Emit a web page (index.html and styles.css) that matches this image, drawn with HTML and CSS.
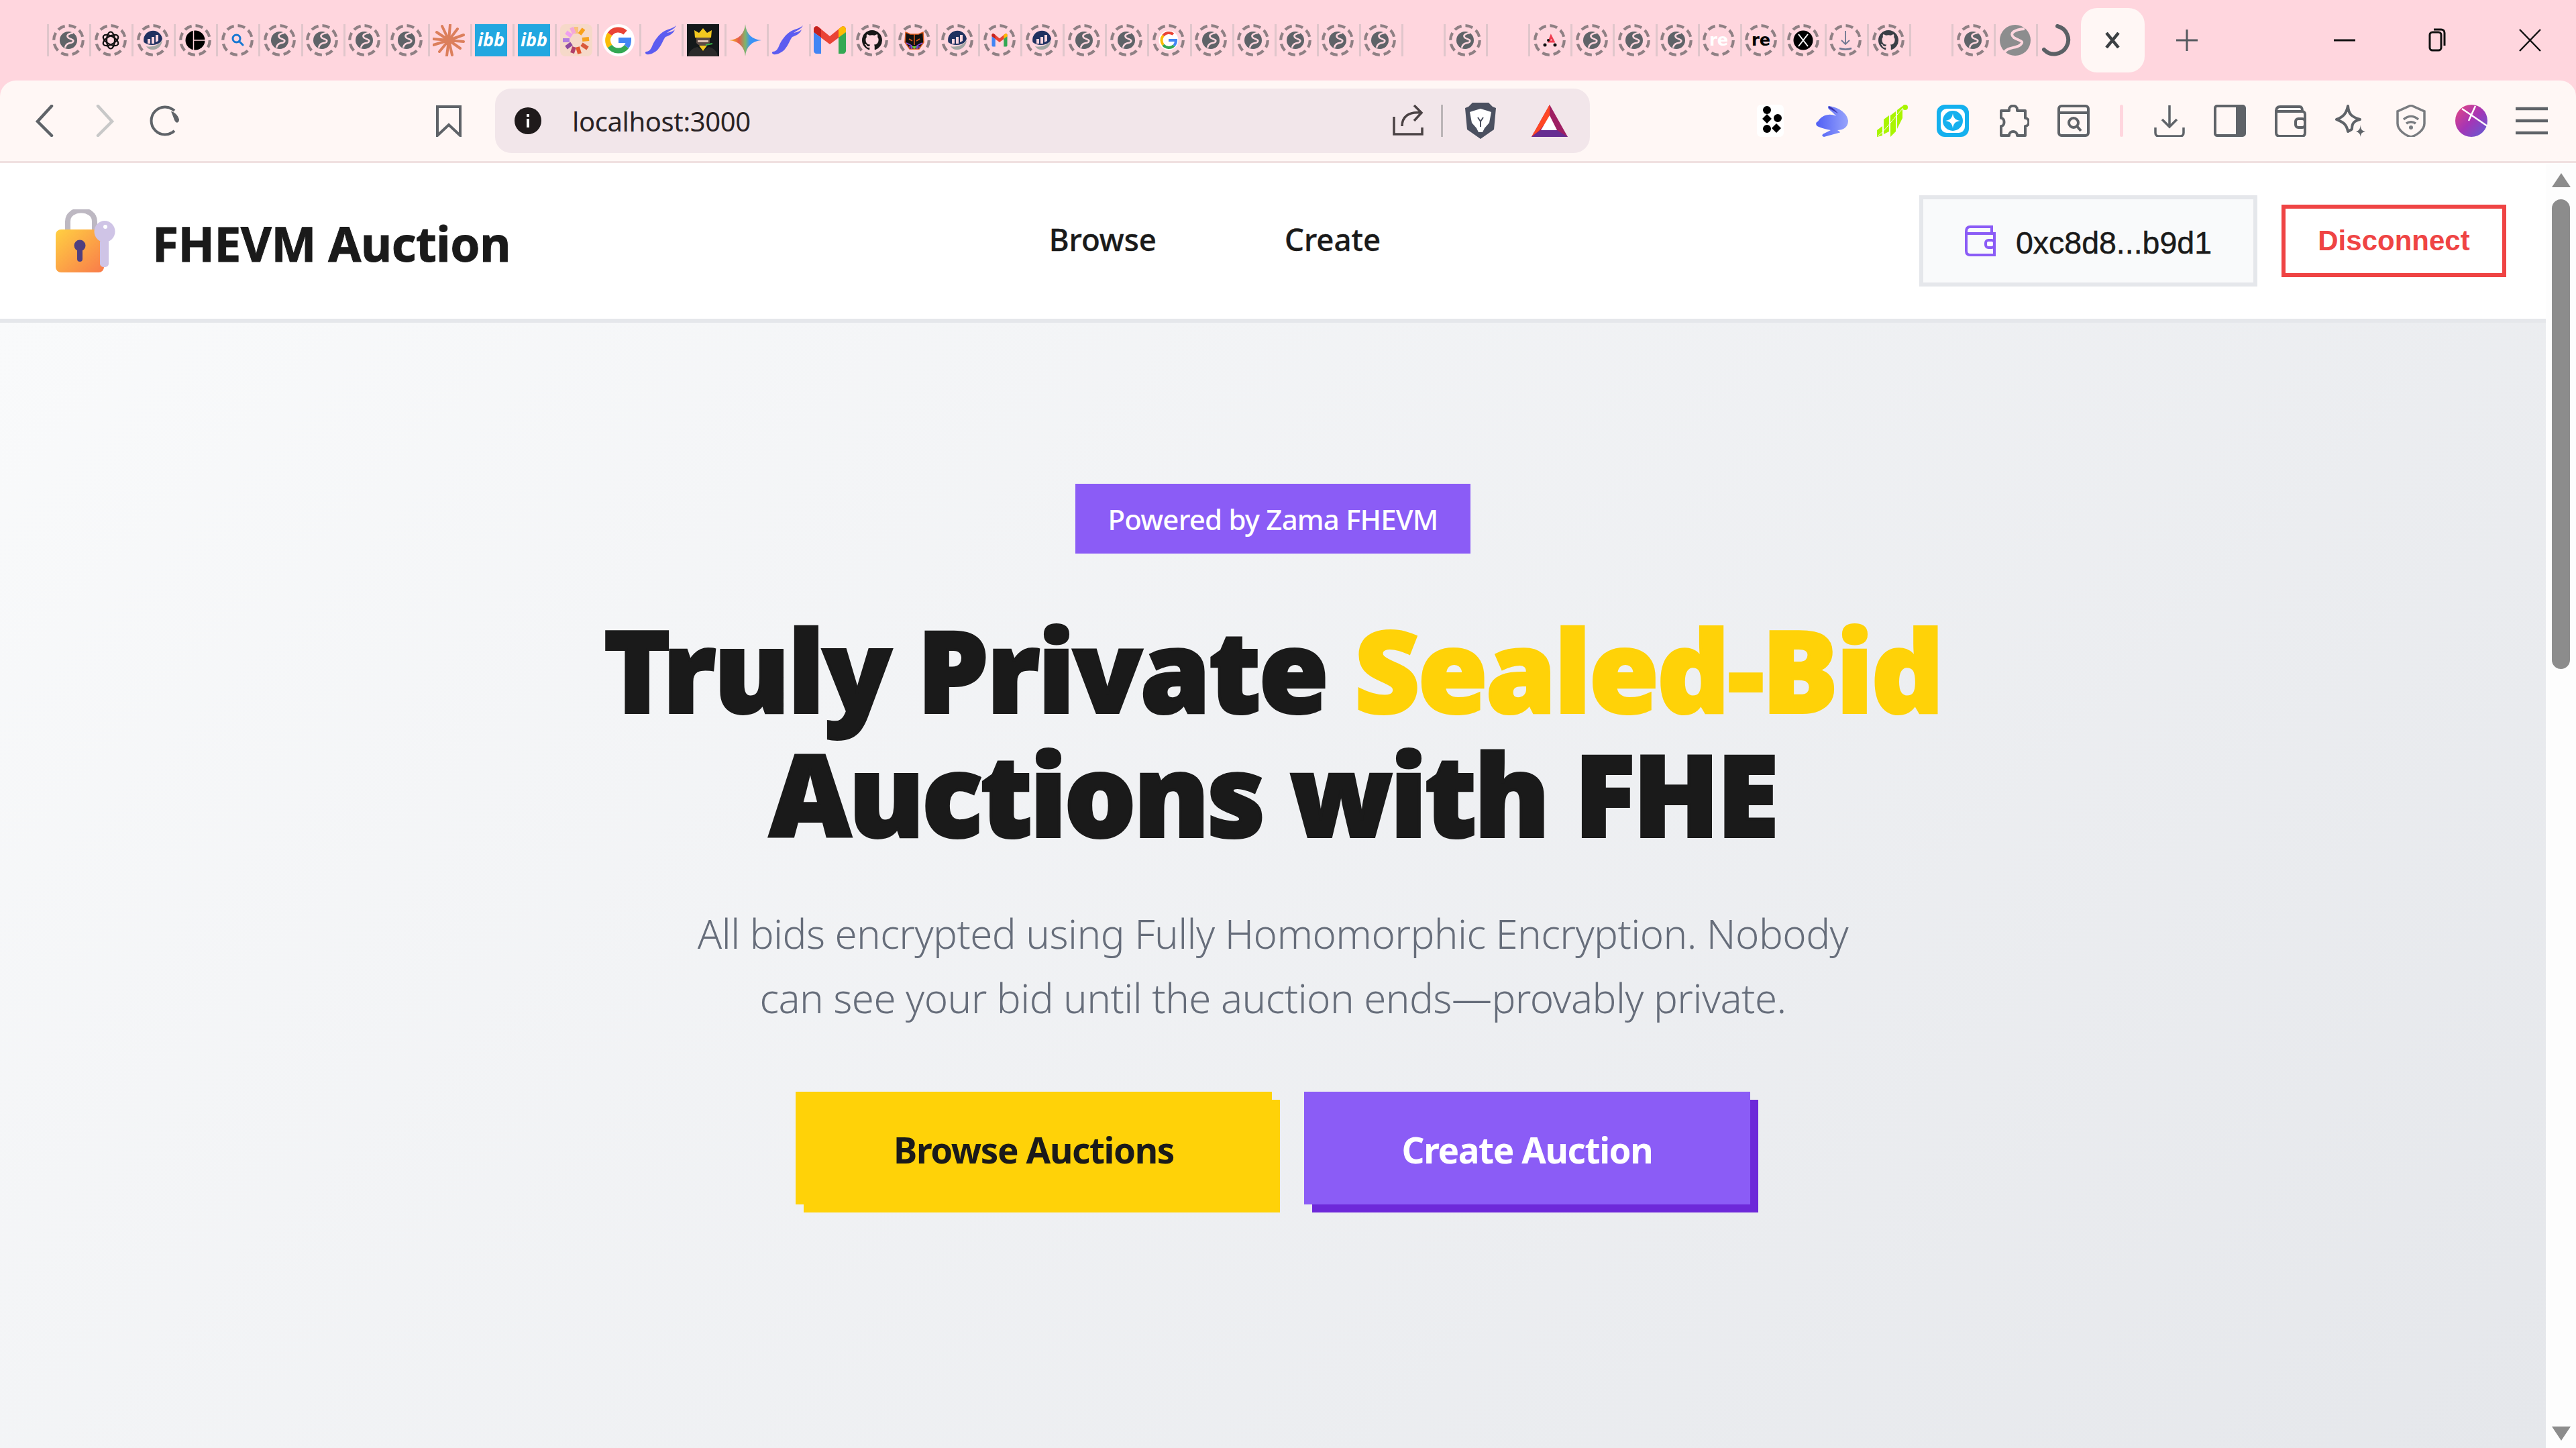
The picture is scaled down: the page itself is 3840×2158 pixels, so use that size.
FILE: index.html
```html
<!DOCTYPE html>
<html lang="en">
<head>
    <meta charset="UTF-8">
    <meta name="viewport" content="width=device-width, initial-scale=1.0">
    <title>FHEVM Auction</title>
    <link rel="stylesheet" href="styles.css">
</head>
<body>
    <!-- shared favicon and toolbar drawings -->
    <svg class="sprite" viewBox="0 0 48 48">
        <defs>
            <linearGradient id="lockBody" x1="0" y1="0" x2="1" y2="1">
                <stop offset="0" stop-color="#ffd042"/>
                <stop offset="1" stop-color="#f97a4a"/>
            </linearGradient>
            <linearGradient id="gemFill" x1="0" y1="0" x2="1" y2="0">
                <stop offset="0" stop-color="#f5c518"/>
                <stop offset=".3" stop-color="#e8594a"/>
                <stop offset=".5" stop-color="#7fb56a"/>
                <stop offset=".65" stop-color="#3a94f5"/>
                <stop offset="1" stop-color="#3a8ff5"/>
            </linearGradient>
            <linearGradient id="rabbitFill" x1="0" y1="0" x2="1" y2="0">
                <stop offset="0" stop-color="#4f5ff5"/>
                <stop offset="1" stop-color="#98a4fb"/>
            </linearGradient>
            <linearGradient id="avatarFill" x1="0" y1="0" x2="1" y2="1">
                <stop offset="0" stop-color="#e8487f"/>
                <stop offset=".5" stop-color="#a535b5"/>
                <stop offset="1" stop-color="#5d5fd6"/>
            </linearGradient>

            <g id="ring"><circle cx="24" cy="24" r="21.8" fill="none" stroke="#8f8084" stroke-width="4.2" stroke-dasharray="11.1 6"/></g>
            <g id="globe">
                <circle cx="24" cy="24" r="13" fill="#5f6368"/>
                <path d="M31 13C24 14 20 17 24 20.5C28 23 34 23 30 27C27 29 21 27 19 35" fill="none" stroke="#ffd6de" stroke-width="2.6"/>
            </g>
            <g id="chart">
                <path d="M10.500 27A14 14 0 1 1 38 22L36 26C30 32 18 33 10.500 27Z" fill="#1f3160"/>
                <path d="M16 29V22H20V29ZM22 29V19H26V29ZM28 27V16H32V25Z" fill="#ffd6de"/>
                <path d="M14 33C24 35 33 31 38 24C37 33 30 39 23 38C19 38 16 36 14 33Z" fill="#a3a6a3"/>
            </g>
            <g id="gmailLogo">
                <path d="M0 8C0 3 5 2 8 5L24 18L40 5C43 2 48 3 48 8V12L24 30L0 12Z" fill="#ea4335"/>
                <path d="M0 8C0 3 5 2 8 5L11 7.500V20L0 12Z" fill="#c5221f"/>
                <path d="M37 7.500L40 5C43 2 48 3 48 8V12L37 20Z" fill="#fbbc04"/>
                <path d="M0 12L11 20V44H4C2 44 0 42 0 40Z" fill="#4285f4"/>
                <path d="M37 20L48 12V40C48 42 46 44 44 44H37Z" fill="#34a853"/>
            </g>
            <path id="octo" d="M8 0C3.580 0 0 3.580 0 8c0 3.540 2.290 6.530 5.470 7.590.4.070.55-.17.55-.38 0-.19-.01-.82-.01-1.490-2.010.37-2.530-.49-2.690-.94-.09-.23-.48-.94-.82-1.130-.28-.15-.68-.52-.01-.53.63-.01 1.080.58 1.230.82.72 1.210 1.870.87 2.330.66.07-.52.28-.87.51-1.070-1.780-.2-3.640-.89-3.640-3.950 0-.87.31-1.590.82-2.150-.08-.2-.36-1.020.08-2.120 0 0 .67-.21 2.200.82.64-.18 1.320-.27 2-.27.68 0 1.360.09 2 .27 1.530-1.040 2.200-.82 2.200-.82.44 1.100.16 1.920.08 2.120.51.56.82 1.270.82 2.150 0 3.070-1.870 3.750-3.650 3.950.29.25.54.73.54 1.480 0 1.070-.01 1.930-.01 2.200 0 .21.15.46.55.38A8.013 8.013 0 0016 8c0-4.420-3.580-8-8-8z"/>
            <path id="feather" d="M47 2C44 8 38 9 33 13C37 12 42 11 45 8C43 14 37 17 31 19C27 24 26 30 21 36C17 42 8 46 3 45C1 44 0 42 2 41C6 41 9 38 11 33C14 25 21 15 30 10C36 7 43 6 47 2Z" fill="#5c5cf0"/>
        </defs>
    </svg>

    <div class="tabstrip">
        <div class="tabs">
            <div class="tab"><svg class="fav" viewBox="0 0 48 48"><use href="#ring"/><use href="#globe"/></svg></div>
            <div class="tab"><svg class="fav" viewBox="0 0 48 48"><use href="#ring"/><g fill="none" stroke="#111" stroke-width="2.200"><ellipse cx="24" cy="24" rx="6" ry="12.500"/><ellipse cx="24" cy="24" rx="6" ry="12.500" transform="rotate(60 24 24)"/><ellipse cx="24" cy="24" rx="6" ry="12.500" transform="rotate(120 24 24)"/></g></svg></div>
            <div class="tab"><svg class="fav" viewBox="0 0 48 48"><use href="#ring"/><use href="#chart"/></svg></div>
            <div class="tab"><svg class="fav" viewBox="0 0 48 48"><use href="#ring"/><circle cx="24" cy="24" r="14.500" fill="#000"/><path d="M21.500 9V39M21.500 24H39" stroke="#ffd6de" stroke-width="1.500"/></svg></div>
            <div class="tab"><svg class="fav" viewBox="0 0 48 48"><use href="#ring"/><circle cx="22.500" cy="21.500" r="5.500" fill="none" stroke="#1677d2" stroke-width="3"/><path d="M26.500 25.500L32 31" stroke="#1677d2" stroke-width="3" stroke-linecap="round"/></svg></div>
            <div class="tab"><svg class="fav" viewBox="0 0 48 48"><use href="#ring"/><use href="#globe"/></svg></div>
            <div class="tab"><svg class="fav" viewBox="0 0 48 48"><use href="#ring"/><use href="#globe"/></svg></div>
            <div class="tab"><svg class="fav" viewBox="0 0 48 48"><use href="#ring"/><use href="#globe"/></svg></div>
            <div class="tab"><svg class="fav" viewBox="0 0 48 48"><use href="#ring"/><use href="#globe"/></svg></div>
            <div class="tab"><svg class="fav" viewBox="0 0 48 48"><path d="M24 24L14 3M24 24L26 1M24 24L37 7M24 24L46 16M24 24L46 26M24 24L41 36M24 24L29 46M24 24L21 47M24 24L10 41M24 24L1 31M24 24L0 22M24 24L6 12" stroke="#dc7f5c" stroke-width="4" stroke-linecap="round"/></svg></div>
            <div class="tab"><svg class="fav" viewBox="0 0 48 48"><rect width="48" height="48" fill="#22a7e0"/><text x="24" y="33" class="ibb">ibb</text></svg></div>
            <div class="tab"><svg class="fav" viewBox="0 0 48 48"><rect width="48" height="48" fill="#22a7e0"/><text x="24" y="33" class="ibb">ibb</text></svg></div>
            <div class="tab"><svg class="fav" viewBox="0 0 48 48"><rect width="48" height="48" rx="8" fill="#f6d9c9"/><g stroke-width="6"><path d="M24 4V14" stroke="#f9c27b"/><path d="M35 7L29 15" stroke="#f9a11b"/><path d="M43 22L33 23" stroke="#f6a21e"/><path d="M41 36L32 30" stroke="#d9593c"/><path d="M29 44L26 34" stroke="#e2552d"/><path d="M18 43L21 34" stroke="#b0406a"/><path d="M9 35L17 29" stroke="#8e4a9e"/><path d="M4 24L14 24" stroke="#b37fe0"/><path d="M9 12L17 18" stroke="#efa0ee"/><path d="M17 5L21 14" stroke="#f4a8d8"/></g></svg></div>
            <div class="tab"><svg class="fav" viewBox="0 0 48 48"><circle cx="24" cy="24" r="24" fill="#fff"/><g fill="none" stroke-width="8"><path d="M34 12.500A15.500 15.500 0 0 0 11 15" stroke="#ea4335"/><path d="M11 15A15.500 15.500 0 0 0 11 33" stroke="#fbbc04"/><path d="M11 33A15.500 15.500 0 0 0 36 33.500" stroke="#34a853"/><path d="M24 24H39C39 28 38 31 36 33.500" stroke="#4285f4"/></g></svg></div>
            <div class="tab"><svg class="fav" viewBox="0 0 48 48"><use href="#feather"/></svg></div>
            <div class="tab"><svg class="fav" viewBox="0 0 48 48"><rect width="48" height="48" fill="#14181a"/><path d="M12 20L11 9L18 13L24 6L30 13L37 9L36 20Z" fill="#f3c81f"/><path d="M14 20H34V28C30 34 18 34 14 28Z" fill="#5c4a44"/><path d="M16 24H32V27H16Z" fill="#e0c2b4"/><path d="M28 31L38 29" stroke="#3bb54a" stroke-width="2"/><path d="M2 48C3 39 10 35 16 34L24 40L32 34C38 35 45 39 46 48Z" fill="#2b2a2a"/><path d="M18 32H30L24 40Z" fill="#f3c81f"/></svg></div>
            <div class="tab"><svg class="fav" viewBox="0 0 48 48"><path d="M24 0C25 14 34 23 48 24C34 25 25 34 24 48C23 34 14 25 0 24C14 23 23 14 24 0Z" fill="url(#gemFill)"/></svg></div>
            <div class="tab"><svg class="fav" viewBox="0 0 48 48"><use href="#feather"/></svg></div>
            <div class="tab"><svg class="fav" viewBox="0 0 48 48"><use href="#gmailLogo"/></svg></div>
            <div class="tab"><svg class="fav" viewBox="0 0 48 48"><use href="#ring"/><use href="#octo" transform="translate(9 9) scale(1.875)" fill="#161616"/></svg></div>
            <div class="tab"><svg class="fav" viewBox="0 0 48 48"><use href="#ring"/><path d="M11 12L18 15H30L37 12L38 27L31 37H17L10 27Z" fill="#111" stroke="#d9581d" stroke-width="1.500"/><path d="M12 28L20 32V37M36 28L28 32V37M16 34H32" fill="none" stroke="#8a4ee0" stroke-width="1.500"/><path d="M24 15V31M16 22L21 25M32 22L27 25" stroke="#d9581d" stroke-width="1.500"/><path d="M20 33H28L24 37Z" fill="#6fd13f"/></svg></div>
            <div class="tab"><svg class="fav" viewBox="0 0 48 48"><use href="#ring"/><use href="#chart"/></svg></div>
            <div class="tab"><svg class="fav" viewBox="0 0 48 48"><use href="#ring"/><use href="#gmailLogo" transform="translate(12.500 12.500) scale(.48)"/></svg></div>
            <div class="tab"><svg class="fav" viewBox="0 0 48 48"><use href="#ring"/><use href="#chart"/></svg></div>
            <div class="tab"><svg class="fav" viewBox="0 0 48 48"><use href="#ring"/><use href="#globe"/></svg></div>
            <div class="tab"><svg class="fav" viewBox="0 0 48 48"><use href="#ring"/><use href="#globe"/></svg></div>
            <div class="tab"><svg class="fav" viewBox="0 0 48 48"><use href="#ring"/><circle cx="24" cy="24" r="14.500" fill="#fff"/><g fill="none" stroke-width="4"><path d="M31 15A11 11 0 0 0 16 17" stroke="#ea4335"/><path d="M16 17A11 11 0 0 0 16 31" stroke="#fbbc04"/><path d="M16 31A11 11 0 0 0 32 32" stroke="#34a853"/><path d="M24 24H35C35 27 34 30 32 32" stroke="#4285f4"/></g></svg></div>
            <div class="tab"><svg class="fav" viewBox="0 0 48 48"><use href="#ring"/><use href="#globe"/></svg></div>
            <div class="tab"><svg class="fav" viewBox="0 0 48 48"><use href="#ring"/><use href="#globe"/></svg></div>
            <div class="tab"><svg class="fav" viewBox="0 0 48 48"><use href="#ring"/><use href="#globe"/></svg></div>
            <div class="tab"><svg class="fav" viewBox="0 0 48 48"><use href="#ring"/><use href="#globe"/></svg></div>
            <div class="tab"><svg class="fav" viewBox="0 0 48 48"><use href="#ring"/><use href="#globe"/></svg></div>
            <div class="tab"></div>
            <div class="tab"><svg class="fav" viewBox="0 0 48 48"><use href="#ring"/><use href="#globe"/></svg></div>
            <div class="tab"></div>
            <div class="tab"><svg class="fav" viewBox="0 0 48 48"><use href="#ring"/><path d="M26 18L23 26H30Z" fill="none" stroke="#ee3b4f" stroke-width="3"/><circle cx="17" cy="31" r="2.500" fill="#111"/><circle cx="22" cy="24" r="2" fill="#111"/><circle cx="32" cy="31" r="2.500" fill="#111"/></svg></div>
            <div class="tab"><svg class="fav" viewBox="0 0 48 48"><use href="#ring"/><use href="#globe"/></svg></div>
            <div class="tab"><svg class="fav" viewBox="0 0 48 48"><use href="#ring"/><use href="#globe"/></svg></div>
            <div class="tab"><svg class="fav" viewBox="0 0 48 48"><use href="#ring"/><use href="#globe"/></svg></div>
            <div class="tab"><svg class="fav" viewBox="0 0 48 48"><use href="#ring"/><text x="24" y="32" class="re re-light">re</text></svg></div>
            <div class="tab"><svg class="fav" viewBox="0 0 48 48"><use href="#ring"/><text x="24" y="32" class="re">re</text></svg></div>
            <div class="tab"><svg class="fav" viewBox="0 0 48 48"><use href="#ring"/><circle cx="24" cy="24" r="14.500" fill="#000"/><path d="M17 15L31 33M31 15L17 33" stroke="#fff" stroke-width="2"/></svg></div>
            <div class="tab"><svg class="fav" viewBox="0 0 48 48"><use href="#ring"/><path d="M24 10V30M18 24L24 30L30 24" fill="none" stroke="#6d7690" stroke-width="1.800"/><path d="M15 36C20 38 28 38 33 36" fill="none" stroke="#6d7690" stroke-width="2.500"/></svg></div>
            <div class="tab"><svg class="fav" viewBox="0 0 48 48"><use href="#ring"/><use href="#octo" transform="translate(9 9) scale(1.875)" fill="#3a3f47"/></svg></div>
            <div class="tab"></div>
            <div class="tab"><svg class="fav" viewBox="0 0 48 48"><use href="#ring"/><use href="#globe"/></svg></div>
            <div class="tab"><svg class="fav" viewBox="0 0 48 48"><circle cx="24" cy="24" r="23" fill="#8c8d8e"/><path d="M38 7C24 8 14 13 22 20C30 25 40 25 30 32C24 36 12 34 8 42" fill="none" stroke="#ffd6de" stroke-width="4"/></svg></div>
            <div class="tab"><svg class="fav" viewBox="0 0 48 48"><path d="M24 3A21 21 0 1 1 4 38" fill="none" stroke="#5b6065" stroke-width="6" stroke-linecap="round"/></svg></div>
        </div>
        <div class="active-tab"><svg class="tab-close" viewBox="0 0 24 24"><path d="M3 1L21 23M21 1L3 23" stroke="#3c4043" stroke-width="4.500"/></svg></div>
        <svg class="new-tab" viewBox="0 0 32 32"><path d="M16 0V32M0 16H32" stroke="#55595e" stroke-width="3"/></svg>
        <div class="window-controls">
            <svg class="win-icon" viewBox="0 0 48 48"><path d="M8 24H40" stroke="#111" stroke-width="3"/></svg>
            <svg class="win-icon" viewBox="0 0 48 48"><rect x="13" y="12" width="17" height="27" rx="4" fill="none" stroke="#111" stroke-width="3"/><path d="M19 8H30C33 8 35 10 35 13V32" fill="none" stroke="#111" stroke-width="3"/></svg>
            <svg class="win-icon" viewBox="0 0 48 48"><path d="M9 8L40 40M40 8L9 40" stroke="#111" stroke-width="2.500"/></svg>
        </div>
    </div>

    <div class="toolbar">
        <svg class="tool" viewBox="0 0 48 48"><path d="M35 2L14 25L35 46" fill="none" stroke="#5f6368" stroke-width="4.500" stroke-linecap="round"/></svg>
        <svg class="tool" viewBox="0 0 48 48"><path d="M14 2L35 25L14 46" fill="none" stroke="#c8c8c8" stroke-width="4.500" stroke-linecap="round"/></svg>
        <svg class="tool" viewBox="0 0 48 48"><path d="M38 9A20.500 20.500 0 1 0 38 39" fill="none" stroke="#5f6368" stroke-width="4"/><path d="M33 10C38 11 43 15 45 22C45 28 40 28 38 23C37 20 35 15 33 10Z" fill="#5f6368"/></svg>
        <svg class="tool bookmark" viewBox="0 0 48 48"><path d="M7 3H41V46L24 30L7 46Z" fill="none" stroke="#5f6368" stroke-width="4"/></svg>
        <div class="address">
            <svg class="info" viewBox="0 0 40 40"><circle cx="20" cy="20" r="20" fill="#1f1a1b"/><rect x="18" y="17" width="4" height="13" fill="#fff"/><rect x="18" y="10" width="4" height="4" fill="#fff"/></svg>
            <span class="url">localhost:3000</span>
            <div class="address-actions">
                <svg class="share" viewBox="0 0 46 48"><path d="M2 18V44H44V34M14 32C14 18 24 10 42 12M32 1L43 12L32 24" fill="none" stroke="#4a4244" stroke-width="3.500"/></svg>
                <span class="address-sep"></span>
                <svg class="brave" viewBox="0 0 48 54"><path d="M12 0H36L42 6L47 8L44 40L24 54L4 40L1 8L6 6Z" fill="#4b5060"/><path d="M14 12L24 9L34 12L40 14L37 30L30 38L27 44H21L18 38L11 30L8 14Z" fill="#fff"/><path d="M20 22L24 28L28 22M24 28V36" fill="none" stroke="#4b5060" stroke-width="2"/></svg>
                <svg class="bat" viewBox="0 0 54 48"><path d="M27 0L54 48H0Z" fill="#9e1f63"/><path d="M27 0V20L12 38L0 48Z" fill="#ff4724"/><path d="M27 16L38 38H14Z" fill="#fff"/><path d="M14 38H38L54 48H0Z" fill="#662d91"/></svg>
            </div>
        </div>
        <div class="extensions">
            <svg class="tool" viewBox="2 0 48 48"><rect x="4" width="40" height="48" rx="6" fill="#fff"/><circle cx="19" cy="8" r="6" fill="#000"/><path d="M19 14L26 21L19 28L12 21ZM35 14A6 6 0 1 1 35 26A6 6 0 1 1 35 14Z" fill="#000"/><circle cx="19" cy="36" r="6" fill="#000"/><path d="M33 28L40 35L33 42L26 35Z" fill="#000"/></svg>
            <svg class="tool" viewBox="0 0 48 48"><path d="M19 2C30 3 46 10 48 24C48 34 40 38 32 38C36 40 37 42 34 42L12 48C8 47 9 44 12 43L22 38C12 36 6 34 2 32C-1 29 0 26 3 25C8 16 20 12 30 17C26 12 20 8 18 5C18 3 18 2 19 2Z" fill="url(#rabbitFill)"/><path d="M19 2C24 4 30 9 33 13C28 10 22 7 19 5Z" fill="#3d35b0"/></svg>
            <svg class="tool" viewBox="0 0 48 48"><path d="M1 48V38L9 32V46ZM11 44V22L19 16V40ZM21 48V16L29 10V40ZM31 36V8L39 2V20Z" fill="#a9f500"/><circle cx="43" cy="4" r="4" fill="#a9f500"/><path d="M2 47C14 38 24 22 40 5" fill="none" stroke="#fff7f5" stroke-width="1"/></svg>
            <svg class="tool" viewBox="0 0 48 48"><rect width="48" height="48" rx="12" fill="#14b0ee"/><rect x="6" y="6" width="36" height="36" rx="9" fill="#fff"/><circle cx="24" cy="24" r="15" fill="#14b0ee"/><path d="M24 13C25 20 28 23 35 24C28 25 25 28 24 35C23 28 20 25 13 24C20 23 23 20 24 13Z" fill="#fff"/></svg>
            <svg class="tool" viewBox="0 0 48 48"><path d="M18 7C18 0 30 0 30 7V9H42V20C49 20 49 32 42 32V46H30C30 38 18 38 18 46H6V32C12 32 12 20 6 20V9H18Z" fill="none" stroke="#5f6368" stroke-width="4" stroke-linejoin="round"/></svg>
            <svg class="tool" viewBox="0 0 48 48"><rect x="2" y="2" width="44" height="44" rx="4" fill="none" stroke="#5f6368" stroke-width="4"/><path d="M2 12H46" stroke="#5f6368" stroke-width="4"/><circle cx="24" cy="27" r="7" fill="none" stroke="#5f6368" stroke-width="4"/><path d="M29 32L35 39" stroke="#5f6368" stroke-width="4"/></svg>
            <span class="tool-sep"></span>
            <svg class="tool" viewBox="0 0 48 48"><path d="M24 1V32M13 22L24 33L35 22M3 34V42C3 45 5 47 8 47H40C43 47 45 45 45 42V34" fill="none" stroke="#5f6368" stroke-width="3.500"/></svg>
            <svg class="tool" viewBox="0 0 48 48"><rect x="2" y="2" width="44" height="44" rx="3" fill="none" stroke="#5f6368" stroke-width="4"/><rect x="33" y="2" width="13" height="44" fill="#5f6368"/></svg>
            <svg class="tool" viewBox="0 0 48 48"><path d="M3 10V42C3 45 5 47 8 47H42C44 47 46 45 46 42V14C46 12 44 10 42 10H3ZM3 10C3 5 5 3 9 3H38C41 3 42 5 42 10" fill="none" stroke="#5f6368" stroke-width="4"/><rect x="32" y="21" width="14" height="13" rx="4" fill="none" stroke="#5f6368" stroke-width="4"/></svg>
            <svg class="tool" viewBox="0 0 48 48"><path d="M20 2C21 14 25 18 38 22C29 24 26 28 26 36C25 38 23 38 20 40C18 28 12 26 3 22C14 18 18 12 20 2Z" fill="none" stroke="#5f6368" stroke-width="4" stroke-linejoin="round"/><path d="M39 30C39 37 41 39 46 40C41 41 39 43 39 48C38 43 36 41 32 40C36 39 38 37 39 30Z" fill="#5f6368"/></svg>
            <svg class="tool" viewBox="0 0 48 48"><path d="M24 1L44 10V28C44 38 32 46 24 48C16 46 4 38 4 28V10Z" fill="none" stroke="#797c80" stroke-width="3.500"/><path d="M13 22C20 16 28 16 35 22M17 28C21 25 27 25 31 28" fill="none" stroke="#797c80" stroke-width="3.500"/><circle cx="24" cy="34" r="3" fill="#797c80"/></svg>
            <svg class="tool" viewBox="0 0 48 48"><circle cx="24" cy="24" r="24" fill="url(#avatarFill)"/><path d="M10 6L48 32M30 2L20 24" stroke="#fff" stroke-width="2.500"/></svg>
            <svg class="tool" viewBox="0 0 48 48"><path d="M0 6H48M0 24H48M0 42H48" stroke="#5f6368" stroke-width="4.500"/></svg>
        </div>
    </div>

    <div class="page">
        <main class="main">
            <nav class="navbar">
                <a class="logo">
                    <svg class="lock" viewBox="0 0 89 94">
                        <path d="M18 32V18C18 -4 58 -4 58 18V32" fill="none" stroke="#bdb8c2" stroke-width="8"/>
                        <rect y="30" width="72" height="64" rx="8" fill="url(#lockBody)"/>
                        <circle cx="36" cy="54" r="8.500" fill="#4f3f7f"/>
                        <rect x="32" y="54" width="8" height="24" rx="4" fill="#4f3f7f"/>
                        <ellipse cx="73" cy="33" rx="15.500" ry="16" fill="#cfc4e6"/>
                        <circle cx="74" cy="26" r="3" fill="#fff"/>
                        <rect x="66" y="44" width="13" height="42" rx="5" fill="#cfc4e6"/>
                    </svg>
                    <span class="logo-text">FHEVM Auction</span>
                </a>
                <div class="nav-links">
                    <a class="nav-link">Browse</a>
                    <a class="nav-link">Create</a>
                </div>
                <div class="nav-right">
                    <div class="wallet">
                        <svg class="wallet-icon" viewBox="0 0 46 46"><path d="M2 9V38C2 42 4 44 8 44H44V12H2ZM2 9C2 4 4 2 8 2H40V12" fill="none" stroke="#8b5cf6" stroke-width="4"/><rect x="31" y="22" width="13" height="11" rx="4" fill="#fff" stroke="#8b5cf6" stroke-width="4"/></svg>
                        <span class="wallet-address">0xc8d8...b9d1</span>
                    </div>
                    <button class="disconnect">Disconnect</button>
                </div>
            </nav>
            <section class="hero">
                <div class="badge">Powered by Zama FHEVM</div>
                <h1>Truly Private <span class="highlight">Sealed-Bid</span><br><span class="title-second">Auctions with FHE</span></h1>
                <p class="subtitle">All bids encrypted using Fully Homomorphic Encryption. Nobody<br>can see your bid until the auction ends—provably private.</p>
                <div class="hero-buttons">
                    <a class="btn btn-yellow">Browse Auctions</a>
                    <a class="btn btn-purple">Create Auction</a>
                </div>
            </section>
        </main>
        <div class="scrollbar">
            <span class="arrow-up"></span>
            <span class="thumb"></span>
            <span class="arrow-down"></span>
        </div>
    </div>
</body>
</html>
```

FILE: styles.css
```css
body {
    margin: 0;
    height: 100vh;
    overflow: hidden;
    display: flex;
    flex-direction: column;
    background: #ffd6de;
    font-family: "Noto Sans", sans-serif;
    color: #1a1a1a;
}

.sprite {
    position: absolute;
    width: 0;
    height: 0;
}

/* tab strip */
.tabstrip {
    height: 120px;
    flex: none;
    display: flex;
    align-items: center;
    padding: 0 45px 0 70px;
}

.tabs {
    display: flex;
    align-items: center;
}

.tab {
    width: 63.1px;
    height: 48px;
    box-sizing: border-box;
    border-left: 3px solid #e0c6cb;
    display: flex;
    align-items: center;
    justify-content: center;
    padding-right: 3px;
}

.fav {
    width: 48px;
    height: 48px;
    flex: none;
}

.ibb {
    font-family: "Noto Sans", sans-serif;
    font-size: 27px;
    font-weight: 700;
    font-style: italic;
    fill: #fff;
    text-anchor: middle;
}

.re {
    font-family: "DejaVu Sans", sans-serif;
    font-size: 24px;
    font-weight: 700;
    fill: #000;
    text-anchor: middle;
}

.re-light {
    fill: #fff;
}

.active-tab {
    width: 95px;
    height: 96px;
    margin-left: 3px;
    background: #fff7f5;
    border-radius: 24px;
    display: flex;
    align-items: center;
    justify-content: center;
}

.tab-close {
    width: 24px;
    height: 24px;
}

.new-tab {
    width: 32px;
    height: 32px;
    margin-left: 47px;
}

.window-controls {
    margin-left: auto;
    display: flex;
    gap: 90px;
}

.win-icon {
    width: 48px;
    height: 48px;
}

/* toolbar */
.toolbar {
    height: 120px;
    flex: none;
    display: flex;
    align-items: center;
    gap: 42px;
    padding: 0 42px;
    background: #fff7f5;
    border-bottom: 3px solid #f0e0e0;
    border-radius: 24px 24px 0 0;
}

.tool {
    width: 48px;
    height: 48px;
    flex: none;
}

.bookmark {
    margin-left: 333px;
    margin-right: 3px;
}

.address {
    width: 1632px;
    height: 96px;
    box-sizing: border-box;
    display: flex;
    align-items: center;
    padding: 0 33px 0 29px;
    background: #f2e6ea;
    border-radius: 24px;
}

.info {
    width: 40px;
    height: 40px;
    margin-right: 46px;
}

.url {
    font-size: 40px;
    letter-spacing: -.4px;
    color: #2a2325;
}

.address-actions {
    margin-left: auto;
    display: flex;
    align-items: center;
}

.share {
    width: 46px;
    height: 48px;
}

.address-sep {
    width: 3px;
    height: 48px;
    margin: 0 32px 0 26px;
    background: #bbb5b7;
}

.brave {
    width: 48px;
    height: 54px;
}

.bat {
    width: 54px;
    height: 48px;
    margin-left: 52px;
}

.extensions {
    margin-left: auto;
    display: flex;
    align-items: center;
    gap: 42px;
}

.tool-sep {
    width: 5px;
    height: 48px;
    margin: 0 3px;
    border-radius: 3px;
    background: #ffd6de;
}

/* page */
.page {
    flex: 1;
    min-height: 0;
    display: flex;
}

.main {
    flex: 1;
    display: flex;
    flex-direction: column;
}

.navbar {
    height: 232px;
    flex: none;
    display: flex;
    align-items: center;
    justify-content: space-between;
    padding: 0 59px 0 83px;
    background: #fff;
    border-bottom: 6px solid #e5e7eb;
}

.logo {
    display: flex;
    align-items: center;
    gap: 55px;
}

.lock {
    width: 89px;
    height: 94px;
}

.logo-text {
    padding-top: 6px;
    font-size: 71px;
    font-weight: 700;
    letter-spacing: -.4px;
    -webkit-text-stroke: 1px #1a1a1a;
}

.nav-links {
    display: flex;
    gap: 191px;
    margin-bottom: 6px;
}

.nav-link {
    font-size: 45.6px;
    font-weight: 500;
    -webkit-text-stroke: .4px #1a1a1a;
}

.nav-right {
    display: flex;
    align-items: center;
    gap: 36px;
}

.wallet {
    width: 504px;
    height: 136px;
    box-sizing: border-box;
    display: flex;
    align-items: center;
    justify-content: center;
    gap: 30px;
    background: #f9fafb;
    border: 6px solid #e5e7eb;
    font-family: "Liberation Sans", sans-serif;
    font-size: 46.5px;
}

.wallet-address {
    padding-top: 6px;
    -webkit-text-stroke: .5px #1a1a1a;
}

.wallet-icon {
    width: 46px;
    height: 46px;
}

.disconnect {
    width: 335px;
    height: 108px;
    padding: 0;
    background: #fff;
    border: 6px solid #ef4444;
    color: #ef4444;
    font-family: "Liberation Sans", sans-serif;
    font-size: 42px;
    font-weight: 700;
}

/* hero */
.hero {
    flex: 1;
    display: flex;
    flex-direction: column;
    align-items: center;
    padding-top: 240px;
    background: linear-gradient(135deg, #f9fafb 0%, #e5e7eb 100%);
    text-align: center;
}

.badge {
    height: 104px;
    box-sizing: border-box;
    display: flex;
    align-items: center;
    padding: 0 48px;
    background: #8b5cf6;
    color: #fff;
    font-size: 42px;
    font-weight: 500;
    letter-spacing: -.8px;
}

h1 {
    margin: 79px 0 0;
    font-size: 168px;
    font-weight: 900;
    line-height: 185px;
    letter-spacing: -2.5px;
    -webkit-text-stroke: 4px #1a1a1a;
    color: #1a1a1a;
}

.highlight {
    color: #ffd208;
    -webkit-text-stroke-color: #ffd208;
}

.title-second {
    letter-spacing: -3.4px;
}

.subtitle {
    margin: 69px 0 0;
    font-size: 60px;
    font-weight: 300;
    line-height: 96px;
    letter-spacing: -.55px;
    color: #666d7a;
}

.hero-buttons {
    display: flex;
    gap: 48px;
    margin-top: 92px;
}

.btn {
    height: 168px;
    box-sizing: border-box;
    padding-top: 4px;
    display: flex;
    align-items: center;
    justify-content: center;
    font-size: 53px;
    font-weight: 700;
    letter-spacing: -1.4px;
}

.btn-yellow {
    width: 710px;
    background: #ffd208;
    color: #1a1a1a;
    box-shadow: 12px 12px 0 #ffd208;
}

.btn-purple {
    width: 665px;
    background: #8b5cf6;
    color: #fff;
    box-shadow: 12px 12px 0 #6d28d9;
}

/* scrollbar */
.scrollbar {
    width: 45px;
    flex: none;
    display: flex;
    flex-direction: column;
    align-items: center;
    padding: 15px 0 11px;
    box-sizing: border-box;
    background: #fdfdfd;
}

.arrow-up,
.arrow-down {
    width: 0;
    height: 0;
    border-left: 14px solid transparent;
    border-right: 14px solid transparent;
}

.arrow-up {
    border-bottom: 21px solid #8c8c8c;
}

.arrow-down {
    margin-top: auto;
    border-top: 21px solid #8c8c8c;
}

.thumb {
    width: 27px;
    height: 700px;
    margin-top: 18px;
    border-radius: 14px;
    background: #8c8c8c;
}
```
